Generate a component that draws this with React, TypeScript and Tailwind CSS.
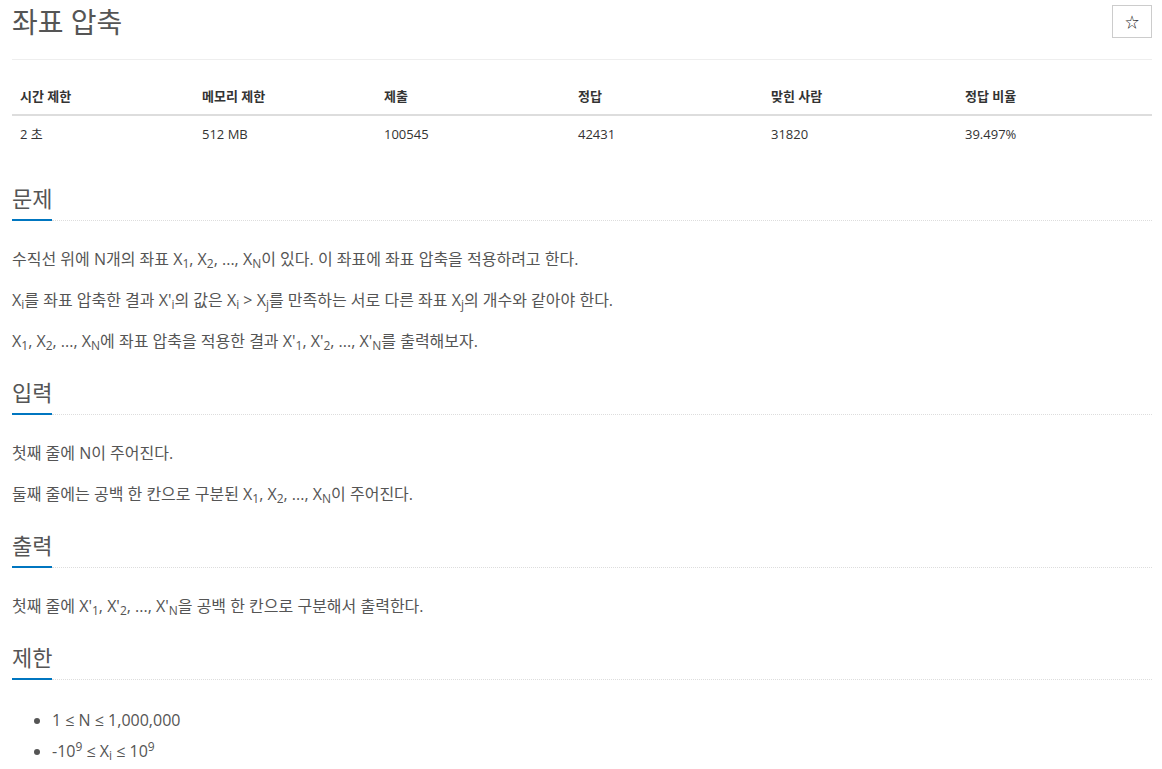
const cols = 'grid grid-cols-[182px_182px_194px_193px_194px_195px]'

const headers = ['시간 제한', '메모리 제한', '제출', '정답', '맞힌 사람', '정답 비율']
const values = ['2 초', '512 MB', '100545', '42431', '31820', '39.497%']

function Headline({ title }: { title: string }) {
  return (
    <div className="flex items-end">
      <h2 className="text-[22px] leading-[30px] pb-[6px] border-b-2 border-[#0076c0] text-[#555]">{title}</h2>
      <div className="flex-1 border-b border-dotted border-[#ddd]" />
    </div>
  )
}

function P({ children }: { children: React.ReactNode }) {
  return <p className="leading-[30px] mb-[11px]">{children}</p>
}

export default function App() {
  return (
    <div className="bg-white min-h-[769px] font-['Open_Sans','Noto_Sans_CJK_KR',sans-serif] text-[#555]">
      <div className="ml-[12px] w-[1140px]">
        {/* title */}
        <div className="flex items-start justify-between h-[60px] border-b border-[#eee]">
          <h1 className="text-[28px] leading-[44px] text-[#555]">좌표 압축</h1>
          <button className="mt-[5px] w-[40px] h-[33px] border border-[#ccc] bg-white flex items-center justify-center text-[14px] text-[#222]">
            ☆
          </button>
        </div>

        {/* info table */}
        <div className="mt-[18px] mb-[31px] text-[13px] text-[#333]">
          <div className={`${cols} border-b-2 border-[#ddd] font-bold`}>
            {headers.map((h) => (
              <div key={h} className="px-[8px] py-[8px] leading-[20px]">{h}</div>
            ))}
          </div>
          <div className={cols}>
            {values.map((v) => (
              <div key={v} className="px-[8px] py-[8px] leading-[20px]">{v}</div>
            ))}
          </div>
        </div>

        <section className="text-[16px]">
          <Headline title="문제" />
          <div className="mt-[23px]">
            <P>수직선 위에 N개의 좌표 X<sub>1</sub>, X<sub>2</sub>, ..., X<sub>N</sub>이 있다. 이 좌표에 좌표 압축을 적용하려고 한다.</P>
            <P>X<sub>i</sub>를 좌표 압축한 결과 X'<sub>i</sub>의 값은 X<sub>i</sub> &gt; X<sub>j</sub>를 만족하는 서로 다른 좌표 X<sub>j</sub>의 개수와 같아야 한다.</P>
            <P>X<sub>1</sub>, X<sub>2</sub>, ..., X<sub>N</sub>에 좌표 압축을 적용한 결과 X'<sub>1</sub>, X'<sub>2</sub>, ..., X'<sub>N</sub>를 출력해보자.</P>
          </div>
        </section>

        <section className="mt-[21px] text-[16px]">
          <Headline title="입력" />
          <div className="mt-[23px]">
            <P>첫째 줄에 N이 주어진다.</P>
            <P>둘째 줄에는 공백 한 칸으로 구분된 X<sub>1</sub>, X<sub>2</sub>, ..., X<sub>N</sub>이 주어진다.</P>
          </div>
        </section>

        <section className="mt-[21px] text-[16px]">
          <Headline title="출력" />
          <div className="mt-[23px]">
            <P>첫째 줄에 X'<sub>1</sub>, X'<sub>2</sub>, ..., X'<sub>N</sub>을 공백 한 칸으로 구분해서 출력한다.</P>
          </div>
        </section>

        <section className="mt-[21px] text-[16px]">
          <Headline title="제한" />
          <ul className="mt-[25px] list-disc pl-[40px]">
            <li className="leading-[31px]">1 ≤ N ≤ 1,000,000</li>
            <li className="leading-[31px]">-10<sup>9</sup> ≤ X<sub>i</sub> ≤ 10<sup>9</sup></li>
          </ul>
        </section>
      </div>
    </div>
  )
}
